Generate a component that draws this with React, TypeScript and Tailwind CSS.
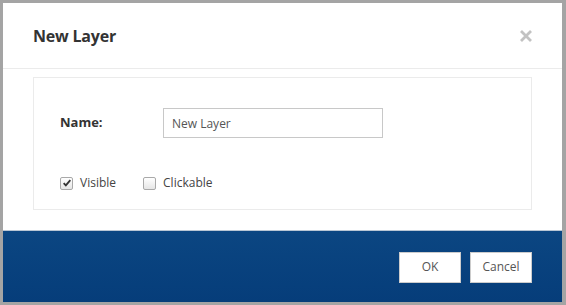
import React from "react";

const CheckBox = ({ checked, label }: { checked: boolean; label: string }) => (
  <label className="flex items-center gap-[7px] text-[12px] text-[#444]">
    <span className="flex size-[13px] items-center justify-center rounded-[2px] border border-[#a9a9a9] bg-gradient-to-b from-white to-[#e6e6e6]">
      {checked && (
        <svg viewBox="0 0 12 12" className="size-[10px]">
          <path d="M2 6.2 L4.6 8.8 L10 2.6" fill="none" stroke="#333" strokeWidth="2.2" />
        </svg>
      )}
    </span>
    {label}
  </label>
);

const App = () => {
  return (
    <div
      className="flex h-[305px] w-[566px] flex-col border-[3px] border-r-4 border-b-[3px] border-[#a4a4a4] bg-white"
      style={{ fontFamily: '"Open Sans", "Noto Sans", sans-serif' }}
    >
      <div className="flex h-[66px] shrink-0 items-center justify-between border-b border-[#ebebeb] pl-[30px] pr-[29px]">
        <h1 className="text-[16px] font-bold tracking-[-0.2px] text-[#333]">New Layer</h1>
        <svg viewBox="0 0 14 14" className="size-[14px]">
          <path d="M2 2 L12 12 M12 2 L2 12" stroke="#c2c2c2" strokeWidth="2.8" />
        </svg>
      </div>
      <div className="flex flex-1 flex-col px-[30px] pt-2 pb-5">
        <div className="flex flex-1 flex-col border border-[#ebebeb] pl-[26px] pt-[30px]">
          <div className="flex items-center">
            <span className="w-[103px] text-[13px] font-bold text-[#333]">Name:</span>
            <input
              defaultValue="New Layer"
              className="h-[30px] w-[220px] border border-[#c8c8c8] px-2 text-[12px] text-[#555] outline-none"
            />
          </div>
          <div className="mt-[36px] flex items-center gap-[27px]">
            <CheckBox checked label="Visible" />
            <CheckBox checked={false} label="Clickable" />
          </div>
        </div>
      </div>
      <div className="flex h-[72px] shrink-0 items-center justify-end gap-[9px] border-t border-[#b9c6d4] bg-gradient-to-b from-[#0b4682] to-[#063d7a] pr-[30px] pt-[1px]">
        <button className="h-[31px] w-[62px] border border-[#ccc] bg-white text-[12px] text-[#555]">OK</button>
        <button className="h-[31px] w-[62px] border border-[#ccc] bg-white text-[12px] text-[#555]">Cancel</button>
      </div>
    </div>
  );
};

export default App;
